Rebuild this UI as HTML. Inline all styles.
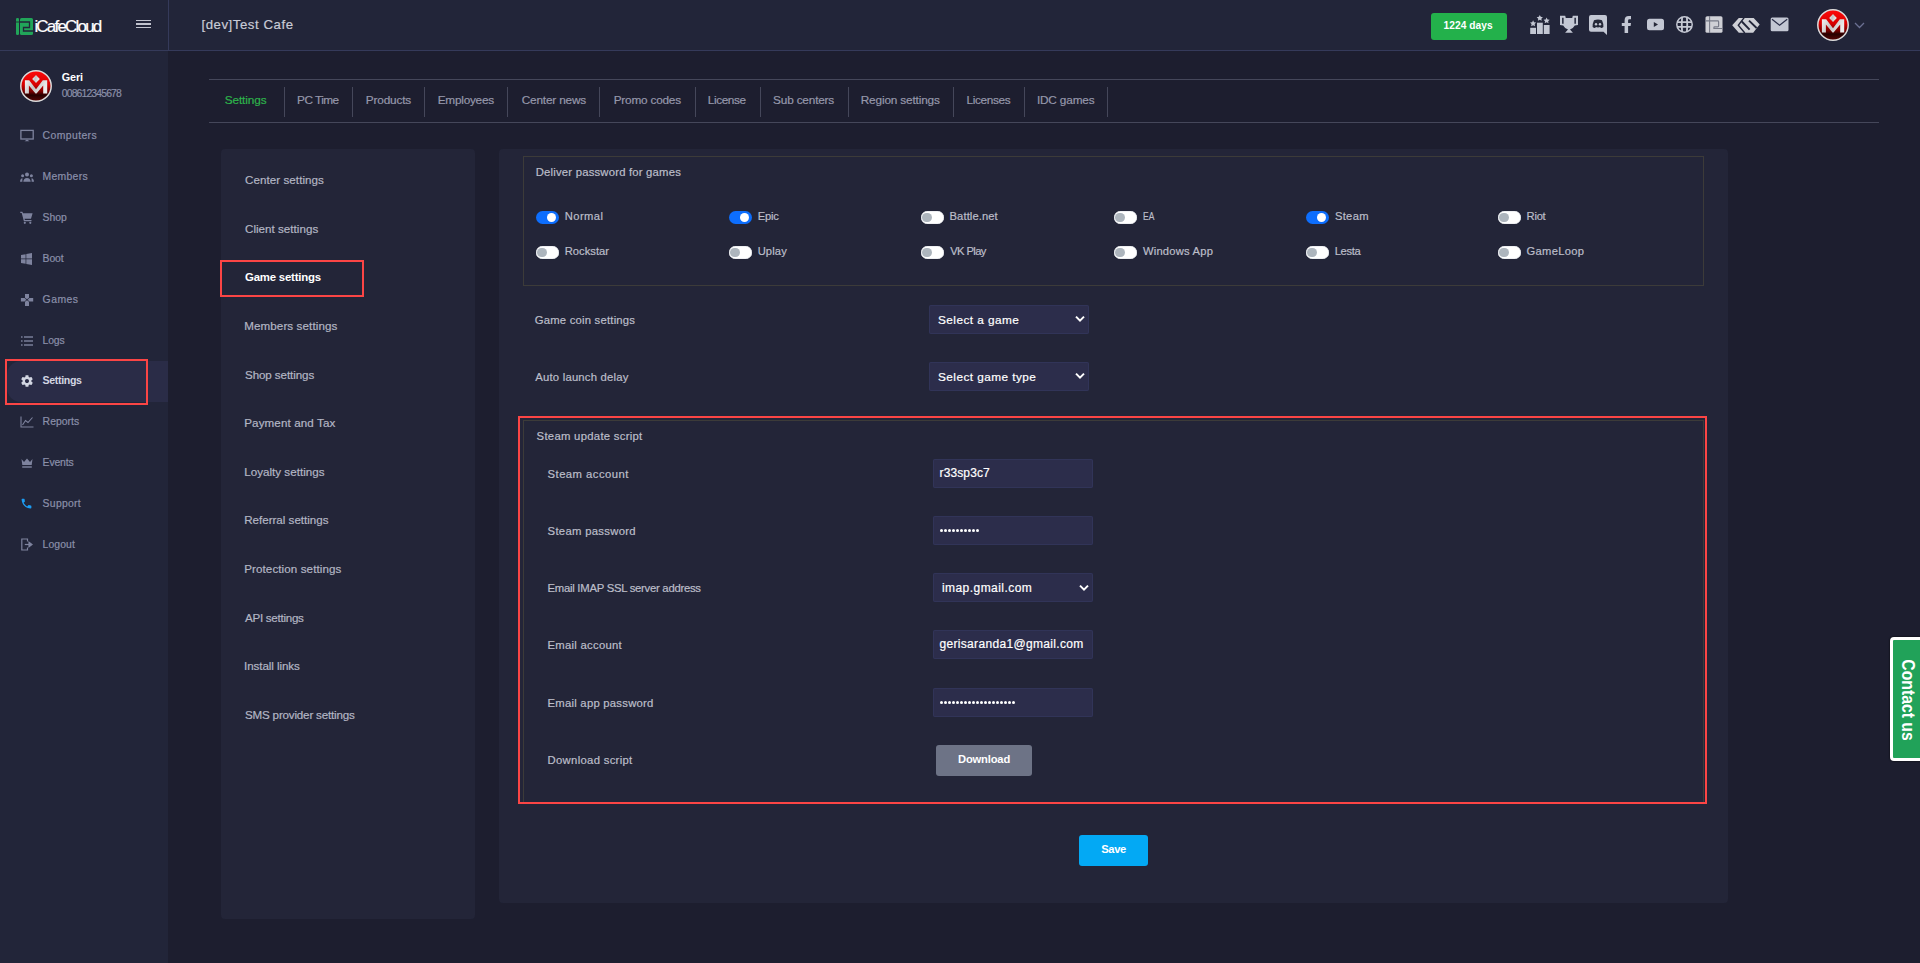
<!DOCTYPE html>
<html><head><meta charset="utf-8">
<style>
*{margin:0;padding:0;box-sizing:border-box}
html,body{width:1920px;height:963px;overflow:hidden}
body{background:#1d1e2f;font-family:"Liberation Sans",sans-serif;position:relative}
.a{position:absolute}
.t{position:absolute;white-space:nowrap;line-height:1;-webkit-text-stroke:0.2px currentColor}
.tg{position:absolute;width:22.6px;height:13.2px;border-radius:7px}
.tg.on{background:#0d6efd}
.tg.on::after{content:"";position:absolute;right:2.2px;top:1.8px;width:9.5px;height:9.5px;border-radius:50%;background:#fff}
.tg.off{background:#fff;box-shadow:inset 0 0 0 0.6px #dde0e6}
.tg.off::after{content:"";position:absolute;left:1.3px;top:1.8px;width:9.5px;height:9.5px;border-radius:50%;background:#adb5bd}
.inp{position:absolute;left:933px;width:160px;height:29px;background:#2c2d4b;border-radius:2px;box-shadow:inset 0 0 0 1px #313458}
.sep{position:absolute;top:87px;width:1px;height:30px;background:#45475a}
.ic{position:absolute}
</style></head><body>
<!-- top bar -->
<div class="a" style="left:0;top:0;width:1920px;height:50px;background:#222539"></div>
<div class="a" style="left:0;top:50px;width:1920px;height:1px;background:#353a5a"></div>
<div class="a" style="left:168px;top:0;width:1px;height:50px;background:#353a5a"></div>
<!-- sidebar -->
<div class="a" style="left:0;top:51px;width:168px;height:912px;background:#222539"></div>
<div class="a" style="left:7px;top:361px;width:161px;height:41px;background:#2a2c47;border-radius:14px 0 0 14px"></div>
<div class="a" style="left:5px;top:359px;width:143px;height:46px;border:2px solid #fb4545"></div>
<!-- tabs -->
<div class="a" style="left:209px;top:79px;width:1670px;height:1px;background:#45475a"></div>
<div class="a" style="left:209px;top:122px;width:1670px;height:1px;background:#45475a"></div>
<div class="sep" style="left:284px"></div><div class="sep" style="left:352px"></div><div class="sep" style="left:424px"></div><div class="sep" style="left:507px"></div><div class="sep" style="left:599px"></div><div class="sep" style="left:695px"></div><div class="sep" style="left:760px"></div><div class="sep" style="left:848px"></div><div class="sep" style="left:953px"></div><div class="sep" style="left:1024px"></div><div class="sep" style="left:1107px"></div>
<!-- panels -->
<div class="a" style="left:221px;top:149px;width:254px;height:770px;background:#232538;border-radius:4px"></div>
<div class="a" style="left:220px;top:260px;width:144px;height:37px;border:2px solid #fb4545"></div>
<div class="a" style="left:499px;top:149px;width:1229px;height:754px;background:#232538;border-radius:4px"></div>
<div class="a" style="left:523px;top:156px;width:1181px;height:130px;border:1px solid #3c3b39"></div>
<!-- toggles -->
<div class="tg on" style="left:536px;top:211px"></div>
<div class="tg on" style="left:729px;top:211px"></div>
<div class="tg off" style="left:921px;top:211px"></div>
<div class="tg off" style="left:1114px;top:211px"></div>
<div class="tg on" style="left:1306px;top:211px"></div>
<div class="tg off" style="left:1498px;top:211px"></div>
<div class="tg off" style="left:536px;top:246px"></div>
<div class="tg off" style="left:729px;top:246px"></div>
<div class="tg off" style="left:921px;top:246px"></div>
<div class="tg off" style="left:1114px;top:246px"></div>
<div class="tg off" style="left:1306px;top:246px"></div>
<div class="tg off" style="left:1498px;top:246px"></div>
<!-- selects -->
<div class="a" style="left:929px;top:305px;width:160px;height:29px;background:#2c2d4b;border-radius:2px;box-shadow:inset 0 0 0 1px #313458"></div>
<div class="a" style="left:929px;top:362px;width:160px;height:29px;background:#2c2d4b;border-radius:2px;box-shadow:inset 0 0 0 1px #313458"></div>
<!-- steam box -->
<div class="a" style="left:518px;top:416px;width:1189px;height:388px;border:2px solid #fb4545"></div>
<div class="a" style="left:523px;top:420px;width:1181px;height:382px;border:1px solid #3c3b39;border-bottom:none"></div>
<div class="inp" style="top:459px"></div>
<div class="inp" style="top:516px"></div>
<div class="inp" style="top:573px"></div>
<div class="inp" style="top:630px"></div>
<div class="inp" style="top:688px"></div>
<div class="a" style="left:936px;top:745px;width:96px;height:31px;background:#6d7386;border-radius:3px"></div>
<div class="a" style="left:1079px;top:835px;width:69px;height:31px;background:#03a9f4;border-radius:3px"></div>
<!-- green days -->
<div class="a" style="left:1431px;top:13px;width:76px;height:27px;background:#23b14b;border-radius:3px"></div>
<!-- contact -->
<div class="a" style="left:1890px;top:637px;width:34px;height:124px;background:#21a259;border:3px solid #fff;border-radius:4px 0 0 4px;box-shadow:0 0 2px #000"></div>
<div class="a" style="left:1908px;top:699.5px;width:0;height:0"><div style="position:absolute;left:0;top:0;transform:translate(-50%,-50%) rotate(90deg) scaleX(0.83);white-space:nowrap;font:bold 19px/1 'Liberation Sans',sans-serif;color:#fff">Contact us</div></div>
<!-- logo -->
<svg class="ic" style="left:16px;top:18px" width="17" height="17" viewBox="0 0 17 17">
<rect x="0" y="0" width="3" height="17" rx="1.2" fill="#21a559"/>
<rect x="4" y="0" width="13" height="17" rx="1.5" fill="#21a559"/>
<rect x="0" y="3.5" width="3" height="1" fill="#1f3a35"/>
<path d="M4 4 H13.5 V9.5 H7.5 V13 H17" fill="none" stroke="#222539" stroke-width="1.3"/>
</svg>
<!-- hamburger -->
<div class="a" style="left:136px;top:19.5px;width:15px;height:1.4px;background:#c2c4cf"></div>
<div class="a" style="left:136px;top:23.3px;width:15px;height:1.4px;background:#c2c4cf"></div>
<div class="a" style="left:136px;top:27.1px;width:15px;height:1.4px;background:#c2c4cf"></div>
<!-- ranking -->
<svg class="ic" style="left:1529px;top:14px" width="22" height="21" viewBox="0 0 22 21" fill="#c3c7d3">
<rect x="1.2" y="13.8" width="5.8" height="6.2"/>
<rect x="8" y="8.7" width="5.8" height="11.3"/>
<rect x="14.8" y="11" width="5.8" height="9"/>
<path id="st" d="M4.1 6.3 l0.95 1.95 2.15 0.3 -1.55 1.5 0.37 2.1 -1.92 -1 -1.92 1 0.37 -2.1 -1.55 -1.5 2.15 -0.3z"/>
<path d="M10.8 0.9 l0.95 1.95 2.15 0.3 -1.55 1.5 0.37 2.1 -1.92 -1 -1.92 1 0.37 -2.1 -1.55 -1.5 2.15 -0.3z"/>
<path d="M17.6 3.5 l0.95 1.95 2.15 0.3 -1.55 1.5 0.37 2.1 -1.92 -1 -1.92 1 0.37 -2.1 -1.55 -1.5 2.15 -0.3z"/>
</svg>
<!-- trophy -->
<svg class="ic" style="left:1559px;top:15px" width="20" height="19" viewBox="0 0 20 19" fill="#c3c7d3" fill-rule="evenodd">
<path d="M1 0.7 H6.2 L6.8 2.9 H13.2 L13.8 0.7 H19 V10 L15.8 10.6 Q14.6 13.2 11 14.6 L13.9 17.8 H6.1 L9 14.6 Q5.4 13.2 4.2 10.6 L1 10 Z M3.1 2.7 V8.7 H4.6 V2.7 Z M15.4 2.7 V8.7 H16.9 V2.7 Z"/>
</svg>
<!-- discord -->
<svg class="ic" style="left:1589px;top:15px" width="18" height="20" viewBox="0 0 18 20">
<path d="M2 0 H16 Q18 0 18 2 V20 L14.5 16.7 H2 Q0 16.7 0 14.7 V2 Q0 0 2 0 Z" fill="#c3c7d3"/>
<path d="M5 5.2 Q9 3.8 13 5.2 Q14.6 8.5 14.4 12 Q13 13.2 11.8 13 L11.2 12 Q9 12.8 6.8 12 L6.2 13 Q5 13.2 3.6 12 Q3.4 8.5 5 5.2 Z" fill="#252838"/>
<circle cx="7" cy="9.3" r="1.2" fill="#c3c7d3"/><circle cx="11" cy="9.3" r="1.2" fill="#c3c7d3"/>
</svg>
<!-- facebook -->
<svg class="ic" style="left:1621px;top:15px" width="11" height="19" viewBox="0 0 11 19" fill="#c3c7d3">
<path d="M3.6 18 V11 H0.8 V8 H3.6 V5.3 Q3.6 1 7.8 1 H10 V4.2 H8.3 Q7.1 4.2 7.1 5.5 V8 H10 L9.6 11 H7.1 V18 Z"/>
</svg>
<!-- youtube -->
<svg class="ic" style="left:1647px;top:18px" width="17" height="13" viewBox="0 0 17 13">
<rect x="0" y="0.7" width="17" height="11.5" rx="2.5" fill="#c3c7d3"/>
<path d="M6.8 3.9 V9 L11 6.45 Z" fill="#252838"/>
</svg>
<!-- globe -->
<svg class="ic" style="left:1675px;top:15px" width="19" height="19" viewBox="0 0 19 19" fill="none" stroke="#c6c9d4">
<circle cx="9.5" cy="9.5" r="7.7" stroke-width="1.5"/>
<path d="M7.1 2 Q6.4 9.5 7.1 17 M11.9 2 Q12.6 9.5 11.9 17" stroke-width="1.8"/>
<path d="M2 7.1 H17 M2 11.9 H17" stroke-width="1.6"/>
</svg>
<!-- i2 -->
<svg class="ic" style="left:1705px;top:16px" width="19" height="18" viewBox="0 0 19 18">
<rect x="0.5" y="0.2" width="17" height="16.6" rx="1.6" fill="#cfd0d6"/>
<path d="M4.6 0 V17" stroke="#777a88" stroke-width="1.1"/>
<path d="M0.5 4.9 H12.8 Q13.6 4.9 13.6 5.7 V10.1 Q13.6 10.9 12.8 10.9 H9.7 Q8.9 10.9 8.9 11.7 V12.5 H17.5" fill="none" stroke="#777a88" stroke-width="1.2"/>
</svg>
<!-- ggleap -->
<svg class="ic" style="left:1731px;top:17px" width="30" height="17" viewBox="0 0 30 17">
<path d="M1.2 8.3 L7.8 0.9 H22.7 L28.7 7.6 L26.4 10.3 L22.2 15.8 H7.8 Z" fill="#cfd0d6"/>
<path d="M13.2 0.6 L7.3 8.2 L13.8 16" fill="none" stroke="#222539" stroke-width="1.4"/>
<path d="M10.8 4.5 L18.6 12.6 M18 3.6 L25.6 11" fill="none" stroke="#222539" stroke-width="1.9"/>
</svg>
<!-- mail -->
<svg class="ic" style="left:1770px;top:17px" width="19" height="15" viewBox="0 0 19 15">
<rect x="0.7" y="0.5" width="17.8" height="13.8" rx="1.5" fill="#c3c7d3"/>
<path d="M2 2.3 L9.6 8.2 L17.2 2.3" fill="none" stroke="#2a2e48" stroke-width="1.2"/>
</svg>
<!-- avatar top -->
<svg class="ic" style="left:1817px;top:9px" width="32" height="32" viewBox="0 0 32 32"><defs>
<linearGradient id="rg1" x1="0" y1="0" x2="0" y2="1"><stop offset="0" stop-color="#ff0a0a"/><stop offset="0.45" stop-color="#d80000"/><stop offset="0.68" stop-color="#7a0000"/><stop offset="0.8" stop-color="#260000"/><stop offset="1" stop-color="#5a0505"/></linearGradient>
<linearGradient id="mg" x1="0" y1="0" x2="1" y2="0.3"><stop offset="0" stop-color="#f4f4f4"/><stop offset="0.5" stop-color="#c4c4c4"/><stop offset="1" stop-color="#ececec"/></linearGradient>
</defs>
<circle cx="16" cy="16" r="15.2" fill="url(#rg1)" stroke="#dcdcdc" stroke-width="1.5"/>
<path d="M4.9 23.6 V10.3 H9.2 L16 19.3 L22.8 10.3 H27.2 V23.6 H23.2 V15.5 L16.5 23.6 H15.5 L8.9 15.5 V23.6 Z" fill="url(#mg)"/>
<path d="M16 4.9 L19.8 8.9 L16 12.9 L12.2 8.9 Z" fill="url(#mg)"/>
</svg>
<svg class="ic" style="left:1854px;top:22px" width="11" height="7" viewBox="0 0 11 7"><path d="M1 1 L5.5 5.5 L10 1" fill="none" stroke="#6b7092" stroke-width="1.3"/></svg>
<!-- avatar side -->
<svg class="ic" style="left:20px;top:70px" width="32" height="32" viewBox="0 0 32 32">
<circle cx="16" cy="16" r="15.2" fill="url(#rg1)" stroke="#dcdcdc" stroke-width="1.5"/>
<path d="M4.9 23.6 V10.3 H9.2 L16 19.3 L22.8 10.3 H27.2 V23.6 H23.2 V15.5 L16.5 23.6 H15.5 L8.9 15.5 V23.6 Z" fill="url(#mg)"/>
<path d="M16 4.9 L19.8 8.9 L16 12.9 L12.2 8.9 Z" fill="url(#mg)"/>
</svg>
<!-- sidebar icons -->
<svg class="ic" style="left:20px;top:129px" width="14" height="13" viewBox="0 0 14 13" fill="none" stroke="#7e839e" stroke-width="1.3">
<rect x="0.9" y="1.4" width="12.3" height="8.6"/><path d="M4.5 12.3 H9.5 L7 10.5 Z" fill="#7e839e" stroke="none"/>
</svg>
<svg class="ic" style="left:20px;top:172px" width="14" height="10" viewBox="0 0 14 10" fill="#7e839e">
<circle cx="7" cy="2.6" r="2"/><circle cx="2.6" cy="3.8" r="1.5"/><circle cx="11.4" cy="3.8" r="1.5"/>
<path d="M3.3 9.8 Q3.6 5.9 7 5.9 Q10.4 5.9 10.7 9.8 Z"/><path d="M0 9.8 Q0.2 6.6 2.5 6.3 Q2.3 8 2.4 9.8 Z"/><path d="M14 9.8 Q13.8 6.6 11.5 6.3 Q11.7 8 11.6 9.8 Z"/>
</svg>
<svg class="ic" style="left:20px;top:211px" width="13" height="13" viewBox="0 0 13 13" fill="#7e839e">
<path d="M0.3 0.7 H2.4 L3 2.2 H12.6 L11 7.8 H4.5 L4.9 9 H11.5 V10.3 H3.9 L1.7 2 H0.3 Z"/><circle cx="4.8" cy="11.8" r="1.1"/><circle cx="10.3" cy="11.8" r="1.1"/>
</svg>
<svg class="ic" style="left:21px;top:253px" width="11" height="12" viewBox="0 0 11 12" fill="#7e839e">
<path d="M0 2 L4.6 1.2 V5.6 H0 Z M5.3 1.1 L11 0 V5.6 H5.3 Z M0 6.3 H4.6 V10.8 L0 10 Z M5.3 6.3 H11 V12 L5.3 11 Z"/>
</svg>
<svg class="ic" style="left:20px;top:293px" width="14" height="14" viewBox="0 0 14 14" fill="#7e839e">
<path d="M5 0.9 H9 V4.8 L7 6.3 L5 4.8 Z M5 12.9 H9 V8.8 L7 7.3 L5 8.8 Z M0.9 5 V8.6 H4.6 L6.3 6.8 L4.6 5 Z M13.2 5 V8.6 H9.4 L7.7 6.8 L9.4 5 Z"/>
</svg>
<svg class="ic" style="left:21px;top:336px" width="12" height="10" viewBox="0 0 12 10" fill="#7e839e">
<rect x="0" y="0.3" width="1.6" height="1.4"/><rect x="3" y="0.3" width="9" height="1.4"/>
<rect x="0" y="4.3" width="1.6" height="1.4"/><rect x="3" y="4.3" width="9" height="1.4"/>
<rect x="0" y="8.3" width="1.6" height="1.4"/><rect x="3" y="8.3" width="9" height="1.4"/>
</svg>
<svg class="ic" style="left:20px;top:374px" width="14" height="14" viewBox="0 0 24 24" fill="#d2d6e2">
<path d="M19.4 13c.04-.33.06-.66.06-1s-.02-.67-.06-1l2.1-1.65c.19-.15.24-.42.12-.64l-2-3.46c-.12-.22-.39-.3-.61-.22l-2.49 1c-.52-.4-1.08-.73-1.69-.98l-.38-2.65C14.46 2.18 14.25 2 14 2h-4c-.25 0-.46.18-.49.42l-.38 2.65c-.61.25-1.17.59-1.69.98l-2.49-1c-.23-.09-.49 0-.61.22l-2 3.46c-.13.22-.07.49.12.64L4.57 11c-.04.33-.07.67-.07 1s.03.67.07 1l-2.11 1.65c-.19.15-.24.42-.12.64l2 3.46c.12.22.39.3.61.22l2.49-1c.52.4 1.08.73 1.69.98l.38 2.65c.03.24.24.42.49.42h4c.25 0 .46-.18.49-.42l.38-2.65c.61-.25 1.17-.59 1.69-.98l2.49 1c.23.09.49 0 .61-.22l2-3.46c.12-.22.07-.49-.12-.64L19.4 13zM12 15.5c-1.93 0-3.5-1.57-3.5-3.5s1.57-3.5 3.5-3.5 3.5 1.57 3.5 3.5-1.57 3.5-3.5 3.5z"/>
</svg>
<svg class="ic" style="left:20px;top:416px" width="14" height="12" viewBox="0 0 14 12" fill="none" stroke="#7e839e" stroke-width="1.1">
<path d="M1 0.5 V11 H13.5"/><path d="M2.5 9 L5.5 4.5 L8 6.5 L12.5 1.5"/>
</svg>
<svg class="ic" style="left:21px;top:458px" width="12" height="10" viewBox="0 0 12 10" fill="#7e839e">
<path d="M0.5 1 L3 4 L6 0.5 L9 4 L11.5 1 L10.7 7 H1.3 Z"/><rect x="1.2" y="8.3" width="9.6" height="1.4"/>
</svg>
<svg class="ic" style="left:20px;top:497px" width="13" height="13" viewBox="0 0 24 24" fill="#1c9cf2">
<path d="M6.62 10.79c1.44 2.83 3.76 5.14 6.59 6.59l2.2-2.2c.27-.27.67-.36 1.02-.24 1.12.37 2.33.57 3.57.57.55 0 1 .45 1 1V20c0 .55-.45 1-1 1-9.39 0-17-7.61-17-17 0-.55.45-1 1-1h3.5c.55 0 1 .45 1 1 0 1.25.2 2.45.57 3.57.11.35.03.74-.25 1.02l-2.2 2.2z"/>
</svg>
<svg class="ic" style="left:21px;top:538px" width="12" height="13" viewBox="0 0 12 13" fill="none" stroke="#7e839e" stroke-width="1.2">
<path d="M6.5 3.5 V1 H0.8 V12 H6.5 V9.5"/><path d="M3.8 6.5 H9.5" /><path d="M8 4.2 L11 6.5 L8 8.8 Z" fill="#7e839e"/>
</svg>
<!-- select chevrons -->
<svg class="ic" style="left:1074px;top:314px" width="12" height="10" viewBox="0 0 12 10"><path d="M2 2.6 L6 6.6 L10 2.6" fill="none" stroke="#fff" stroke-width="2"/></svg>
<svg class="ic" style="left:1074px;top:371px" width="12" height="10" viewBox="0 0 12 10"><path d="M2 2.6 L6 6.6 L10 2.6" fill="none" stroke="#fff" stroke-width="2"/></svg>
<svg class="ic" style="left:1078px;top:583px" width="12" height="10" viewBox="0 0 12 10"><path d="M2 2.6 L6 6.6 L10 2.6" fill="none" stroke="#fff" stroke-width="2"/></svg>
<!-- password dots -->
<div class="a" style="left:940px;top:529px;width:3px;height:3px;border-radius:50%;background:#fff"></div>
<div class="a" style="left:944px;top:529px;width:3px;height:3px;border-radius:50%;background:#fff"></div>
<div class="a" style="left:948px;top:529px;width:3px;height:3px;border-radius:50%;background:#fff"></div>
<div class="a" style="left:952px;top:529px;width:3px;height:3px;border-radius:50%;background:#fff"></div>
<div class="a" style="left:956px;top:529px;width:3px;height:3px;border-radius:50%;background:#fff"></div>
<div class="a" style="left:960px;top:529px;width:3px;height:3px;border-radius:50%;background:#fff"></div>
<div class="a" style="left:964px;top:529px;width:3px;height:3px;border-radius:50%;background:#fff"></div>
<div class="a" style="left:968px;top:529px;width:3px;height:3px;border-radius:50%;background:#fff"></div>
<div class="a" style="left:972px;top:529px;width:3px;height:3px;border-radius:50%;background:#fff"></div>
<div class="a" style="left:976px;top:529px;width:3px;height:3px;border-radius:50%;background:#fff"></div>
<div class="a" style="left:940px;top:701px;width:3px;height:3px;border-radius:50%;background:#fff"></div>
<div class="a" style="left:944px;top:701px;width:3px;height:3px;border-radius:50%;background:#fff"></div>
<div class="a" style="left:948px;top:701px;width:3px;height:3px;border-radius:50%;background:#fff"></div>
<div class="a" style="left:952px;top:701px;width:3px;height:3px;border-radius:50%;background:#fff"></div>
<div class="a" style="left:956px;top:701px;width:3px;height:3px;border-radius:50%;background:#fff"></div>
<div class="a" style="left:960px;top:701px;width:3px;height:3px;border-radius:50%;background:#fff"></div>
<div class="a" style="left:964px;top:701px;width:3px;height:3px;border-radius:50%;background:#fff"></div>
<div class="a" style="left:968px;top:701px;width:3px;height:3px;border-radius:50%;background:#fff"></div>
<div class="a" style="left:972px;top:701px;width:3px;height:3px;border-radius:50%;background:#fff"></div>
<div class="a" style="left:976px;top:701px;width:3px;height:3px;border-radius:50%;background:#fff"></div>
<div class="a" style="left:980px;top:701px;width:3px;height:3px;border-radius:50%;background:#fff"></div>
<div class="a" style="left:984px;top:701px;width:3px;height:3px;border-radius:50%;background:#fff"></div>
<div class="a" style="left:988px;top:701px;width:3px;height:3px;border-radius:50%;background:#fff"></div>
<div class="a" style="left:992px;top:701px;width:3px;height:3px;border-radius:50%;background:#fff"></div>
<div class="a" style="left:996px;top:701px;width:3px;height:3px;border-radius:50%;background:#fff"></div>
<div class="a" style="left:1000px;top:701px;width:3px;height:3px;border-radius:50%;background:#fff"></div>
<div class="a" style="left:1004px;top:701px;width:3px;height:3px;border-radius:50%;background:#fff"></div>
<div class="a" style="left:1008px;top:701px;width:3px;height:3px;border-radius:50%;background:#fff"></div>
<div class="a" style="left:1012px;top:701px;width:3px;height:3px;border-radius:50%;background:#fff"></div>

<div class="t" style="left:34.40px;top:18.00px;font-size:17px;letter-spacing:-1.805px;color:#ffffff">iCafeCloud</div>
<div class="t" style="left:201.44px;top:18.01px;font-size:13.2px;letter-spacing:0.558px;color:#c9cbd6">[dev]Test Cafe</div>
<div class="t" style="left:1443.56px;top:21.00px;font-size:10.2px;letter-spacing:0.049px;color:#ffffff;font-weight:700;-webkit-text-stroke:0">1224 days</div>
<div class="t" style="left:61.80px;top:72.00px;font-size:10.8px;letter-spacing:-0.135px;color:#ffffff;font-weight:700;-webkit-text-stroke:0">Geri</div>
<div class="t" style="left:61.80px;top:89.00px;font-size:10.4px;letter-spacing:-0.852px;color:#8a8fa8">008612345678</div>
<div class="t" style="left:42.60px;top:131.00px;font-size:10.4px;letter-spacing:0.410px;color:#8b90aa">Computers</div>
<div class="t" style="left:42.60px;top:172.00px;font-size:10.4px;letter-spacing:0.282px;color:#8b90aa">Members</div>
<div class="t" style="left:42.60px;top:213.00px;font-size:10.4px;letter-spacing:-0.029px;color:#8b90aa">Shop</div>
<div class="t" style="left:42.60px;top:254.00px;font-size:10.4px;letter-spacing:-0.129px;color:#8b90aa">Boot</div>
<div class="t" style="left:42.60px;top:295.00px;font-size:10.4px;letter-spacing:0.491px;color:#8b90aa">Games</div>
<div class="t" style="left:42.60px;top:336.00px;font-size:10.4px;letter-spacing:-0.145px;color:#8b90aa">Logs</div>
<div class="t" style="left:42.60px;top:375.00px;font-size:10.6px;letter-spacing:-0.343px;color:#d3d6e2;font-weight:700;-webkit-text-stroke:0">Settings</div>
<div class="t" style="left:42.60px;top:417.00px;font-size:10.4px;letter-spacing:0.035px;color:#8b90aa">Reports</div>
<div class="t" style="left:42.60px;top:458.00px;font-size:10.4px;letter-spacing:-0.134px;color:#8b90aa">Events</div>
<div class="t" style="left:42.60px;top:499.00px;font-size:10.4px;letter-spacing:0.292px;color:#8b90aa">Support</div>
<div class="t" style="left:42.60px;top:540.00px;font-size:10.4px;letter-spacing:0.101px;color:#8b90aa">Logout</div>
<div class="t" style="left:224.70px;top:95.01px;font-size:11.8px;letter-spacing:-0.092px;color:#2db34b">Settings</div>
<div class="t" style="left:297.10px;top:95.01px;font-size:11.8px;letter-spacing:-0.530px;color:#9698ab">PC Time</div>
<div class="t" style="left:365.80px;top:95.01px;font-size:11.8px;letter-spacing:-0.165px;color:#9698ab">Products</div>
<div class="t" style="left:437.74px;top:95.01px;font-size:11.8px;letter-spacing:-0.242px;color:#9698ab">Employees</div>
<div class="t" style="left:521.70px;top:95.01px;font-size:11.8px;letter-spacing:-0.173px;color:#9698ab">Center news</div>
<div class="t" style="left:613.70px;top:95.01px;font-size:11.8px;letter-spacing:-0.210px;color:#9698ab">Promo codes</div>
<div class="t" style="left:707.74px;top:95.01px;font-size:11.8px;letter-spacing:-0.384px;color:#9698ab">License</div>
<div class="t" style="left:773.10px;top:95.01px;font-size:11.8px;letter-spacing:-0.179px;color:#9698ab">Sub centers</div>
<div class="t" style="left:860.74px;top:95.01px;font-size:11.8px;letter-spacing:-0.154px;color:#9698ab">Region settings</div>
<div class="t" style="left:966.56px;top:95.01px;font-size:11.8px;letter-spacing:-0.343px;color:#9698ab">Licenses</div>
<div class="t" style="left:1036.90px;top:95.01px;font-size:11.8px;letter-spacing:-0.163px;color:#9698ab">IDC games</div>
<div class="t" style="left:245.00px;top:174.01px;font-size:11.6px;letter-spacing:0.066px;color:#b3b6c4">Center settings</div>
<div class="t" style="left:245.00px;top:223.01px;font-size:11.6px;letter-spacing:0.027px;color:#b3b6c4">Client settings</div>
<div class="t" style="left:245.00px;top:272.01px;font-size:11.4px;letter-spacing:-0.205px;color:#ffffff;font-weight:700;-webkit-text-stroke:0">Game settings</div>
<div class="t" style="left:244.20px;top:320.01px;font-size:11.6px;letter-spacing:0.109px;color:#b3b6c4">Members settings</div>
<div class="t" style="left:245.00px;top:369.01px;font-size:11.6px;letter-spacing:-0.088px;color:#b3b6c4">Shop settings</div>
<div class="t" style="left:244.20px;top:417.01px;font-size:11.6px;letter-spacing:0.130px;color:#b3b6c4">Payment and Tax</div>
<div class="t" style="left:244.20px;top:466.01px;font-size:11.6px;letter-spacing:0.027px;color:#b3b6c4">Loyalty settings</div>
<div class="t" style="left:244.20px;top:514.01px;font-size:11.6px;letter-spacing:-0.006px;color:#b3b6c4">Referral settings</div>
<div class="t" style="left:244.20px;top:563.01px;font-size:11.6px;letter-spacing:0.098px;color:#b3b6c4">Protection settings</div>
<div class="t" style="left:245.00px;top:612.01px;font-size:11.6px;letter-spacing:-0.271px;color:#b3b6c4">API settings</div>
<div class="t" style="left:244.00px;top:660.01px;font-size:11.6px;letter-spacing:-0.069px;color:#b3b6c4">Install links</div>
<div class="t" style="left:245.00px;top:709.01px;font-size:11.6px;letter-spacing:-0.181px;color:#b3b6c4">SMS provider settings</div>
<div class="t" style="left:535.74px;top:167.01px;font-size:11.3px;letter-spacing:0.204px;color:#bcbec9">Deliver password for games</div>
<div class="t" style="left:564.74px;top:211.00px;font-size:11.2px;letter-spacing:0.430px;color:#bcbec9">Normal</div>
<div class="t" style="left:757.70px;top:211.00px;font-size:11.2px;letter-spacing:-0.183px;color:#bcbec9">Epic</div>
<div class="t" style="left:949.56px;top:211.00px;font-size:11.2px;letter-spacing:0.098px;color:#bcbec9">Battle.net</div>
<div class="t" style="left:1142.74px;top:211.00px;font-size:11.2px;letter-spacing:0.000px;color:#bcbec9;transform:scaleX(0.757);transform-origin:0 0">EA</div>
<div class="t" style="left:1334.90px;top:211.00px;font-size:11.2px;letter-spacing:0.321px;color:#bcbec9">Steam</div>
<div class="t" style="left:1526.56px;top:211.00px;font-size:11.2px;letter-spacing:-0.243px;color:#bcbec9">Riot</div>
<div class="t" style="left:564.74px;top:246.00px;font-size:11.2px;letter-spacing:0.012px;color:#bcbec9">Rockstar</div>
<div class="t" style="left:757.70px;top:246.00px;font-size:11.2px;letter-spacing:0.108px;color:#bcbec9">Uplay</div>
<div class="t" style="left:950.20px;top:246.00px;font-size:11.2px;letter-spacing:-0.600px;color:#bcbec9">VK Play</div>
<div class="t" style="left:1142.90px;top:246.00px;font-size:11.2px;letter-spacing:0.222px;color:#bcbec9">Windows App</div>
<div class="t" style="left:1334.74px;top:246.00px;font-size:11.2px;letter-spacing:-0.341px;color:#bcbec9">Lesta</div>
<div class="t" style="left:1526.56px;top:246.00px;font-size:11.2px;letter-spacing:0.304px;color:#bcbec9">GameLoop</div>
<div class="t" style="left:534.74px;top:315.01px;font-size:11.3px;letter-spacing:0.209px;color:#bcbec9">Game coin settings</div>
<div class="t" style="left:535.30px;top:372.01px;font-size:11.3px;letter-spacing:0.202px;color:#bcbec9">Auto launch delay</div>
<div class="t" style="left:938.00px;top:315.01px;font-size:11.8px;letter-spacing:0.451px;color:#ffffff">Select a game</div>
<div class="t" style="left:938.00px;top:372.01px;font-size:11.8px;letter-spacing:0.445px;color:#ffffff">Select game type</div>
<div class="t" style="left:536.60px;top:431.01px;font-size:11.3px;letter-spacing:0.288px;color:#bcbec9">Steam update script</div>
<div class="t" style="left:547.56px;top:469.01px;font-size:11.3px;letter-spacing:0.457px;color:#bcbec9">Steam account</div>
<div class="t" style="left:547.56px;top:526.01px;font-size:11.3px;letter-spacing:0.302px;color:#bcbec9">Steam password</div>
<div class="t" style="left:547.56px;top:583.01px;font-size:11.3px;letter-spacing:-0.260px;color:#bcbec9">Email IMAP SSL server address</div>
<div class="t" style="left:547.56px;top:640.01px;font-size:11.3px;letter-spacing:0.263px;color:#bcbec9">Email account</div>
<div class="t" style="left:547.56px;top:698.01px;font-size:11.3px;letter-spacing:0.239px;color:#bcbec9">Email app password</div>
<div class="t" style="left:547.56px;top:755.01px;font-size:11.3px;letter-spacing:0.306px;color:#bcbec9">Download script</div>
<div class="t" style="left:939.60px;top:467.01px;font-size:12px;letter-spacing:0.107px;color:#ffffff">r33sp3c7</div>
<div class="t" style="left:941.92px;top:582.01px;font-size:12px;letter-spacing:0.451px;color:#ffffff">imap.gmail.com</div>
<div class="t" style="left:939.40px;top:638.01px;font-size:12px;letter-spacing:0.333px;color:#ffffff">gerisaranda1@gmail.com</div>
<div class="t" style="left:958.00px;top:754.00px;font-size:11.2px;letter-spacing:-0.173px;color:#ffffff;font-weight:700;-webkit-text-stroke:0">Download</div>
<div class="t" style="left:1101.20px;top:844.00px;font-size:11.2px;letter-spacing:-0.335px;color:#ffffff;font-weight:700;-webkit-text-stroke:0">Save</div>
</body></html>
